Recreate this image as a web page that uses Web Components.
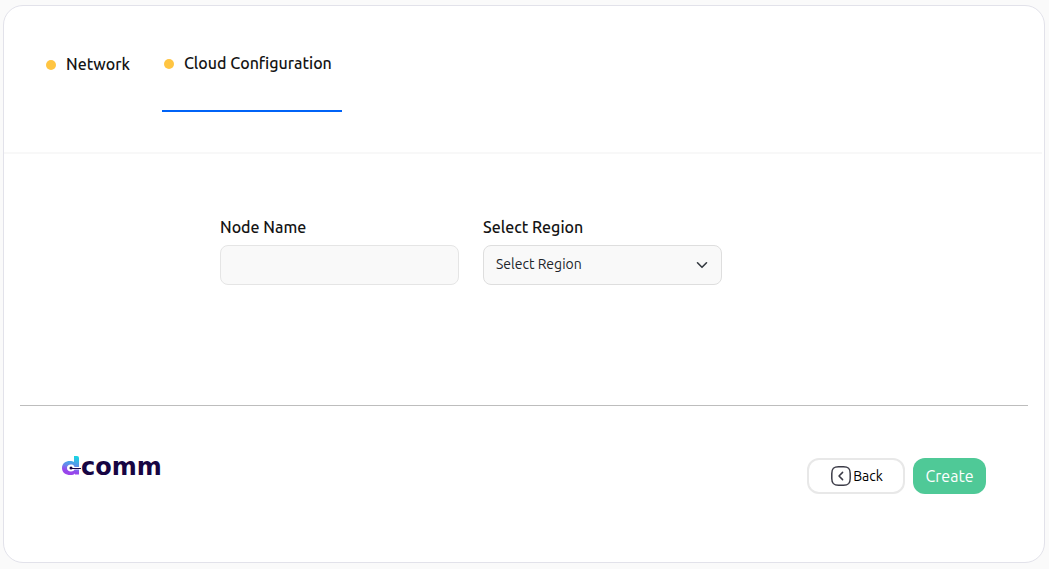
<!DOCTYPE html>
<html lang="en">
<head>
<meta charset="utf-8">
<meta name="viewport" content="width=device-width, initial-scale=1">
<title>Cloud Configuration</title>
<style>
  body { margin: 0; background: #fafafa; color: #141414; font: 16px/24px Ubuntu, "Noto Sans", sans-serif; }
</style>
</head>
<body>
<wizard-card>
  <step-tabs slot="header">
    <step-tab>Network</step-tab>
    <step-tab active>Cloud Configuration</step-tab>
  </step-tabs>
  <node-form></node-form>
  <wizard-footer slot="footer">
    <brand-logo></brand-logo>
    <action-button slot="actions" variant="outline">
      <svg slot="icon" width="20" height="20" viewBox="0 0 20 20" fill="none" stroke="#3b3b47" stroke-linecap="round" stroke-linejoin="round" aria-hidden="true"><path stroke-width="1.5" d="M7.5 .8h5c5 0 6.700 1.700 6.700 6.700v5c0 5-1.700 6.700-6.700 6.700h-5c-5 0-6.700-1.700-6.700-6.700v-5c0-5 1.700-6.700 6.700-6.700Z"/><path stroke-width="1.500" d="M11.600 6.400 8 10l3.600 3.600"/></svg>Back</action-button>
    <action-button slot="actions" variant="solid">Create</action-button>
  </wizard-footer>
</wizard-card>
<script>
function define(name, markup) {
  const template = document.createElement('template');
  template.innerHTML = markup;
  customElements.define(name, class extends HTMLElement {
    constructor() {
      super();
      this.attachShadow({ mode: 'open' }).append(template.content.cloneNode(true));
    }
  });
}

define('wizard-card', `
<style>
  :host { display: block; padding: 5px 4px 6px 3px; }
  main { border: 1px solid #e2e2ea; border-radius: 20px; background: #fff; }
  header { margin-right: 2px; padding: 33px 32px 40px; border-bottom: 2px solid #f8f8f8; }
  section { padding: 61px 16px 120px; }
</style>
<main>
  <header><slot name="header"></slot></header>
  <section><slot></slot></section>
  <slot name="footer"></slot>
</main>`);

define('step-tabs', `
<style>
  :host { display: block; }
  nav { display: flex; align-items: flex-start; gap: 22px; }
</style>
<nav aria-label="Steps"><slot></slot></nav>`);

define('step-tab', `
<style>
  :host { display: block; }
  button { display: flex; align-items: center; gap: 10px; padding: 13px 10px 34px; border: 0; background: none; color: inherit; font: inherit; font-weight: 500; cursor: pointer; }
  :host([active]) button { padding: 12px 10px 35px 2px; border-bottom: 2px solid #0063f7; }
  i { width: 10px; height: 10px; margin-top: 2px; border-radius: 50%; background: #ffc542; }
</style>
<button type="button"><i></i><slot></slot></button>`);

define('node-form', `
<style>
  :host { display: block; max-width: 608px; margin: 0 auto; }
  form { display: grid; grid-template-columns: 1fr 1fr; gap: 24px; max-width: 502px; }
  .field { display: grid; gap: 6px; }
  label { font-weight: 500; }
  input, select { box-sizing: border-box; width: 100%; height: 40px; padding: 0 12px; border: 1px solid #e5e5e5; border-radius: 8px; background: #f9f9f9; color: #212529; font: 14px/20px Ubuntu, "Noto Sans", sans-serif; }
  select { appearance: none; padding-bottom: 2px; border-color: #dedede; }
  .select { position: relative; }
  svg { position: absolute; right: 14px; top: 14px; pointer-events: none; }
</style>
<form>
  <div class="field"><label for="name">Node Name</label><input id="name" type="text"></div>
  <div class="field"><label for="region">Select Region</label>
    <div class="select"><select id="region"><option>Select Region</option></select>
      <svg width="12" height="12" viewBox="0 0 12 12" fill="none" stroke="#343a40" stroke-width="1.600" stroke-linecap="round" stroke-linejoin="round" aria-hidden="true"><path d="m1.500 3.800 4.500 4.500 4.500-4.500"/></svg>
    </div>
  </div>
</form>`);

define('wizard-footer', `
<style>
  :host { display: block; padding: 0 16px; }
  footer { display: flex; justify-content: space-between; align-items: flex-start; padding: 50px 42px 68px; border-top: 1px solid #bdbdbd; }
  .actions { display: flex; gap: 8px; padding-top: 2px; }
</style>
<footer><slot></slot><div class="actions"><slot name="actions"></slot></div></footer>`);

define('brand-logo', `
<style>
  :host { display: flex; align-items: flex-start; }
  span { color: #170543; font: bold 24px/22px "DejaVu Sans", sans-serif; }
</style>
<svg width="19" height="20" viewBox="0 0 19 20" aria-label="d" role="img">
  <defs><linearGradient id="g" x1="12" y1="0" x2="7" y2="20" gradientUnits="userSpaceOnUse"><stop offset="0" stop-color="#18d6e2"/><stop offset=".5" stop-color="#6589eb"/><stop offset=".75" stop-color="#9548ed"/><stop offset="1" stop-color="#9d43e8"/></linearGradient></defs>
  <path fill="url(#g)" d="M12 0h3q2 0 2 2v9h-4.500C12 9 10.500 8.500 9 8.500c-2.500 0-4 1.500-4 3.500s1.500 3.500 4 3.500c2 0 3-.800 3.500-2H17v5h-4v-1c-1 1-2.500 1.500-4.500 1.500C3.500 19 0 16.500 0 12s3.500-7 8-7c1.500 0 3 .3 4 1Z"/>
  <circle cx="9" cy="12" r="1.500" fill="#170543"/><path stroke="#170543" d="M9 12.500h10"/>
</svg><span>comm</span>`);

define('action-button', `
<style>
  :host { display: block; }
  button { display: flex; align-items: center; justify-content: center; gap: 2px; box-sizing: border-box; height: 36px; padding: 0 12px; border: 0; border-radius: 12px; font: inherit; cursor: pointer; }
  :host([variant=outline]) button { min-width: 98px; padding: 0 10px 0 12px; border: 2px solid #e8e8e8; background: #fff; color: #000; font-size: 14px; }
  :host([variant=solid]) button { min-width: 73px; background: #4fc997; color: #fff; }
</style>
<button type="button"><slot name="icon"></slot><slot></slot></button>`);
</script>
</body>
</html>
